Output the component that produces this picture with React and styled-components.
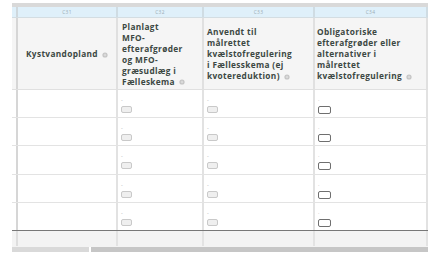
import React from 'react'
import styled, { createGlobalStyle } from 'styled-components'

const GlobalStyle = createGlobalStyle`
  html, body { margin: 0; padding: 0; background: #fff; }
  body { font-family: "Open Sans", "Liberation Sans", sans-serif; }
`

const COLS = '6px 100px 86px 111px 113px'

const Page = styled.main`
  padding: 3px 0 0 12px;
  width: 416px;
`

const TopStrip = styled.div`
  height: 4px;
  background: #d9d9d9;
`

const Row = styled.div`
  display: grid;
  grid-template-columns: ${COLS};
  height: ${p => p.$h};
  background: ${p => p.$bg || '#fff'};
  border-bottom: 1px solid ${p => p.$line || '#e3e3e3'};
  box-sizing: border-box;
`

const Cell = styled.div`
  box-sizing: border-box;
  border-right: 2px solid ${p => p.$border || '#e2e2e2'};
  min-width: 0;
`

const CodeCell = styled(Cell)`
  display: flex;
  align-items: center;
  justify-content: center;
  font-size: 4.8px;
  color: #9aacb5;
  letter-spacing: 0.3px;
`

const HeadCell = styled(Cell)`
  display: flex;
  align-items: center;
  padding: 0 ${p => p.$pad || '4px'};
  font-size: 8.3px;
  font-weight: 700;
  letter-spacing: 0.35px;
  line-height: 11px;
  color: #3c4843;
  white-space: nowrap;
`

const DataCell = styled(Cell)`
  display: flex;
  flex-direction: column;
  padding: 7px 3px 0;
`

const Dash = styled.span`
  font-size: 5.5px;
  line-height: 6px;
  height: 9px;
  color: #aaa;
`

const Check = styled.span`
  display: block;
  box-sizing: border-box;
  width: ${p => (p.$enabled ? '13px' : '11px')};
  height: ${p => (p.$enabled ? '8px' : '7px')};
  border-radius: 2px;
  border: ${p => (p.$enabled ? '1.4px solid #6f6f6f' : '1px solid #c9c9c9')};
  background: ${p => (p.$enabled ? '#fff' : '#efefef')};
`

const Scroll = styled.div`
  display: flex;
  height: 5px;
  gap: 2px;
`

const Track = styled.div`
  width: 77px;
  background: #d9d9d9;
`

const Thumb = styled.div`
  flex: 1;
  background: #c6c6c6;
`

const Info = () => (
  <svg width="6" height="6" viewBox="0 0 6 6" style={{ marginLeft: 4, verticalAlign: 'middle' }}>
    <circle cx="3" cy="3" r="2.6" fill="#c4c4c4" />
    <path d="M3 1.6v2.8M1.6 3h2.8" stroke="#e9e9e9" strokeWidth="0.7" />
  </svg>
)

const headers = [
  { code: 'C31', lines: ['Kystvandopland'], pad: '8px' },
  { code: 'C32', lines: ['Planlagt', 'MFO-', 'efterafgrøder', 'og MFO-', 'græsudlæg i', 'Fælleskema'] },
  { code: 'C33', lines: ['Anvendt til', 'målrettet', 'kvælstofregulering', 'i Fællesskema (ej', 'kvotereduktion)'], pad: '3px' },
  { code: 'C34', lines: ['Obligatoriske', 'efterafgrøder eller', 'alternativer i', 'målrettet', 'kvælstofregulering'], pad: '2px' },
]

const HeadText = ({ lines }) => (
  <div>
    {lines.map((l, i) => (
      <React.Fragment key={i}>
        {l}
        {i === lines.length - 1 ? <Info /> : <br />}
      </React.Fragment>
    ))}
  </div>
)

export default function App() {
  const rows = [0, 1, 2, 3, 4]
  return (
    <Page>
      <GlobalStyle />
      <TopStrip />
      <Row $h="11px" $bg="#dff0fa" $line="#d3dde2">
        <Cell $border="#cfd8dd" />
        {headers.map(h => (
          <CodeCell key={h.code} $border="#cfdce3">{h.code}</CodeCell>
        ))}
      </Row>
      <Row $h="72px" $bg="#f5f5f5" $line="#e0e0e0">
        <Cell $border="#d6d6d6" />
        {headers.map(h => (
          <HeadCell key={h.code} $pad={h.pad} $border="#e0e0e0">
            <HeadText lines={h.lines} />
          </HeadCell>
        ))}
      </Row>
      {rows.map(r => (
        <Row key={r} $h="28.2px" $line={r === rows.length - 1 ? '#777' : '#e3e3e3'}>
          <Cell $border="#d6d6d6" />
          <Cell />
          <DataCell>
            <Dash>-</Dash>
            <Check />
          </DataCell>
          <DataCell>
            <Dash>-</Dash>
            <Check />
          </DataCell>
          <DataCell>
            <Dash>·</Dash>
            <Check $enabled />
          </DataCell>
        </Row>
      ))}
      <Row $h="16px" $bg="#f3f3f3" $line="#f3f3f3">
        <Cell $border="#dedede" />
        <Cell $border="#e3e3e3" />
        <Cell $border="#e3e3e3" />
        <Cell $border="#e3e3e3" />
        <Cell $border="#e3e3e3" />
      </Row>
      <Scroll>
        <Track />
        <Thumb />
      </Scroll>
    </Page>
  )
}
